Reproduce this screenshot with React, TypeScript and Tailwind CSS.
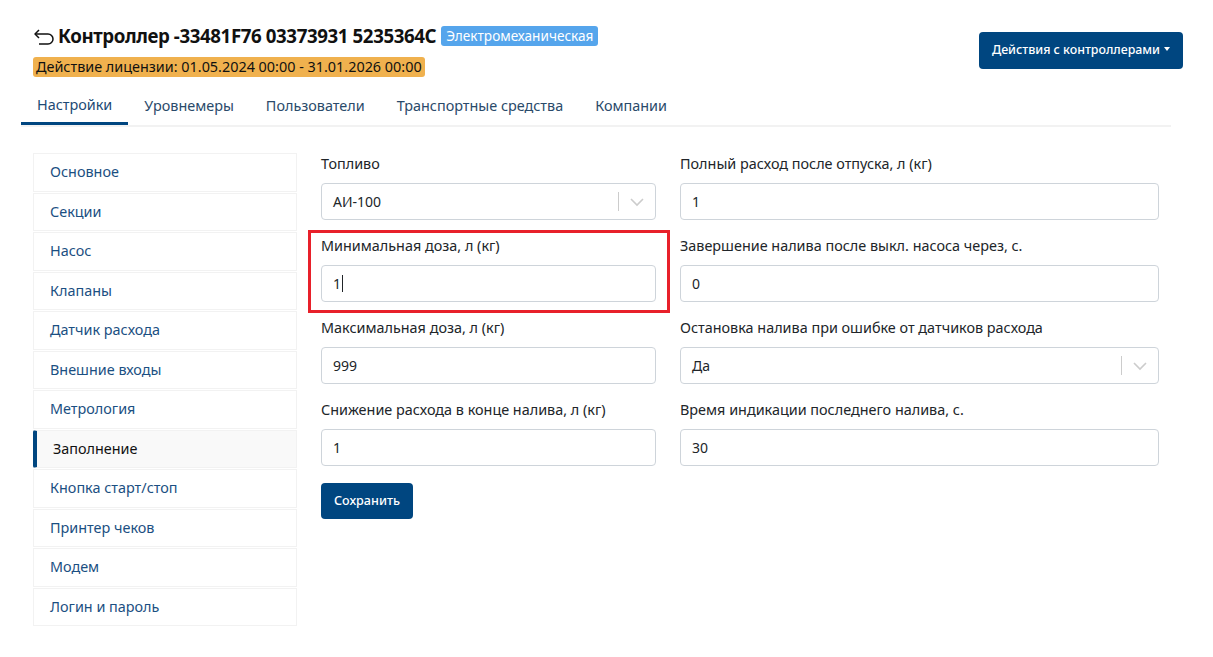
import React from 'react';

const tabs = ['Настройки', 'Уровнемеры', 'Пользователи', 'Транспортные средства', 'Компании'];

const menu = [
  'Основное',
  'Секции',
  'Насос',
  'Клапаны',
  'Датчик расхода',
  'Внешние входы',
  'Метрология',
  'Заполнение',
  'Кнопка старт/стоп',
  'Принтер чеков',
  'Модем',
  'Логин и пароль',
];

function Field({ label, value, select, caret }: { label: string; value: string; select?: boolean; caret?: boolean }) {
  return (
    <div className="flex flex-col">
      <label className="text-[14.4px] leading-[20px] text-[#212529] mb-[9px]">{label}</label>
      <div className="h-[37px] border border-[#ced4da] rounded-[4px] bg-white flex items-center pl-[11px] pr-0">
        <span className="flex-1 text-[14px] text-[#212529] flex items-center">
          {value}
          {caret && <span className="inline-block w-px h-[17px] bg-[#212529] ml-[1px]" />}
        </span>
        {select && (
          <div className="flex items-center h-full py-[8px]">
            <span className="w-px h-full bg-[#cccccc]" />
            <svg width="36" height="20" viewBox="0 0 36 20" className="text-[#cccccc]">
              <path d="M12 7l6 6 6-6" fill="none" stroke="currentColor" strokeWidth="1.6" />
            </svg>
          </div>
        )}
      </div>
    </div>
  );
}

export default function App() {
  return (
    <div className="w-full min-h-screen bg-white font-['Noto_Sans',sans-serif] text-[#212529]">
      <div className="pl-[21px] pr-[30px] pt-[22px]">
        {/* Header */}
        <div className="flex items-start justify-between pl-[12px]">
          <div className="flex flex-col">
            <div className="flex items-center h-[28px]">
              <svg width="24" height="20" viewBox="0 0 24 20" className="mr-[1px]">
                <path d="M6 4L2 8l4 4" fill="none" stroke="#111" strokeWidth="1.5" strokeLinejoin="round" />
                <path d="M2 8h13a5 5 0 0 1 0 10H6" fill="none" stroke="#111" strokeWidth="1.5" />
              </svg>
              <h1 className="text-[18.7px] font-bold tracking-[-0.4px] text-[#111]">Контроллер -33481F76 03373931 5235364C</h1>
              <span className="ml-[5px] bg-[#55a5ec] text-white text-[13.6px] leading-[20px] px-[5px] rounded-[3px]">Электромеханическая</span>
            </div>
            <div className="mt-[4px]">
              <span className="inline-block bg-[#f0b14e] text-[#111] text-[14.4px] leading-[20px] px-[3px] rounded-[3px]">
                Действие лицензии: 01.05.2024 00:00 - 31.01.2026 00:00
              </span>
            </div>
          </div>
          <button className="mt-[10px] h-[37px] px-[13px] bg-[#004680] text-white text-[12.4px] font-medium rounded-[4px] flex items-center gap-[4px]">
            Действия с контроллерами
            <span className="inline-block w-0 h-0 border-l-[3.5px] border-r-[3.5px] border-t-[4px] border-l-transparent border-r-transparent border-t-white mb-[3px]" />
          </button>
        </div>

        {/* Tabs */}
        <div className="flex border-b-2 border-[#f2f2f2] mt-[9px] mr-[12px]">
          {tabs.map((t, i) => (
            <div
              key={t}
              className={
                i === 0
                  ? 'px-[16px] h-[38px] flex items-center text-[14.4px] text-[#1d4a75] border-b-[3px] border-[#004680] -mb-[2px]'
                  : 'px-[16px] h-[38px] flex items-center text-[14.4px] text-[#2a4a6a]'
              }
            >
              {t}
            </div>
          ))}
        </div>

        {/* Body */}
        <div className="flex mt-[26px] pl-[12px]">
          <div className="w-[264px] flex flex-col gap-[1px] shrink-0">
            {menu.map((m) => {
              const active = m === 'Заполнение';
              return (
                <div
                  key={m}
                  className={
                    active
                      ? 'h-[38.5px] flex items-center border border-[#f2f2f2] border-l-[4px] border-l-[#004680] rounded-l-[2px] bg-[#f9f9f9] pl-[16px] text-[14.4px] text-[#111]'
                      : 'h-[38.5px] flex items-center border border-[#f2f2f2] pl-[16px] text-[14.4px] text-[#1b4f82]'
                  }
                >
                  {m}
                </div>
              );
            })}
          </div>

          <div className="flex-1 ml-[24px] mr-[12px] pt-[1px]">
            <div className="grid grid-cols-[335px_479px] gap-x-[24px] gap-y-[16px]">
              <Field label="Топливо" value="АИ-100" select />
              <Field label="Полный расход после отпуска, л (кг)" value="1" />
              <div className="relative">
                <div className="absolute -left-[13px] -top-[6px] w-[362px] h-[83px] border-[3px] border-[#e8202a] pointer-events-none" />
                <Field label="Минимальная доза, л (кг)" value="1" caret />
              </div>
              <Field label="Завершение налива после выкл. насоса через, с." value="0" />
              <Field label="Максимальная доза, л (кг)" value="999" />
              <Field label="Остановка налива при ошибке от датчиков расхода" value="Да" select />
              <Field label="Снижение расхода в конце налива, л (кг)" value="1" />
              <Field label="Время индикации последнего налива, с." value="30" />
            </div>
            <button className="mt-[17px] h-[36px] px-[13px] bg-[#004680] text-white text-[12.6px] font-medium rounded-[4px]">
              Сохранить
            </button>
          </div>
        </div>
      </div>
    </div>
  );
}
